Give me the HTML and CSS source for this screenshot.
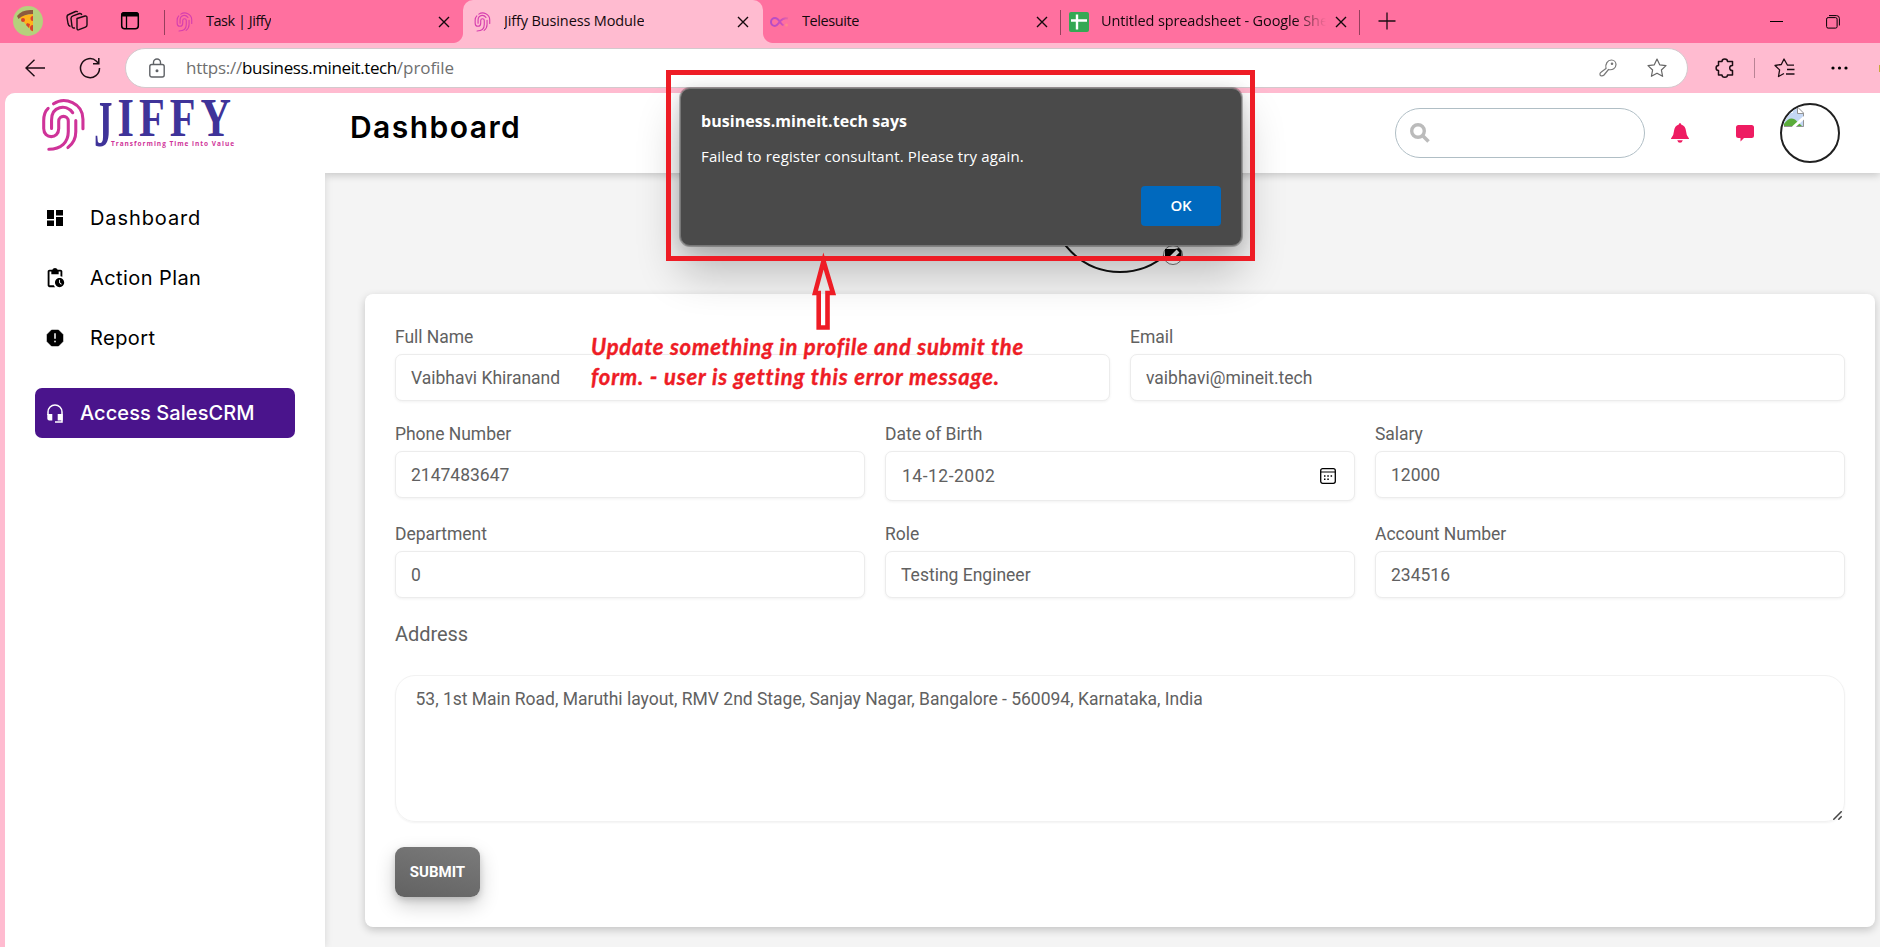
FILE: index.html
```html
<!DOCTYPE html>
<html lang="en">
<head>
<meta charset="utf-8">
<title>Jiffy Business Module</title>
<link rel="stylesheet" href="styles.css">
</head>
<body>
<svg class="defs" width="0" height="0" aria-hidden="true">
  <symbol id="finger" viewBox="38 26 126 158">
    <g fill="none" stroke="currentColor" stroke-linecap="round">
      <path d="M72 43C105 20 158 42 158 88V116"/>
      <path d="M56 56Q43 68 43 92V115C43 147 87 147 87 115V94C87 75 115 75 115 94V125C115 155 95 176 58 176"/>
      <path d="M66 115V90C66 50 108 42 128 69"/>
      <path d="M137 92V125C137 148 128 161 114 171"/>
    </g>
  </symbol>
  <symbol id="close" viewBox="0 0 12 12"><path d="M1 1l10 10M11 1L1 11" fill="none" stroke="currentColor" stroke-width="1.4"/></symbol>
</svg>

<div class="tabstrip">
  <svg class="pizza" width="30" height="30" viewBox="0 0 30 30"><circle cx="15" cy="15" r="15" fill="#b5d17c"/><path d="M5 10L20 8V26Z" fill="#ffb31a"/><path d="M4 10Q9 3 20 4V8Q11 8 5.500 13Z" fill="#8d5b3e"/><circle cx="10" cy="14" r="2" fill="#d8432b"/><path d="M20 10a2.500 2.500 0 0 0 0 5zM20 19a2.500 2.500 0 0 0 0 6zM14 17l3 1-1 4-3-3z" fill="#d8432b"/></svg>
  <svg class="workspaces" width="22" height="22" viewBox="0 0 22 22" fill="none" stroke="#1c0d13" stroke-width="1.4" stroke-linejoin="round"><path d="M11 8.500l8-2.500q2-.4 2 1.600V15q0 1.500-1.500 2.100l-6.500 2.600q-2 .6-2-1.400z"/><path d="M9 17.800q-2.500.8-3-1.500L5 8.500Q5 6.500 7 5.800L13.500 3.500q1.900-.4 2.300 1.500"/><path d="M4.500 16.500Q2.500 16 2 13.500L1 7.500Q.8 5.200 2.800 4.500L9.500 1.500q1.600-.5 2.200.6"/></svg>
  <svg class="vertical" width="20" height="20" viewBox="0 0 20 20"><rect x="1.700" y="1.700" width="16.600" height="16" rx="3" fill="none" stroke="#000" stroke-width="1.500"/><path d="M1 5.500V4Q1 1 4 1H16Q19 1 19 4V5.500Z"/><path d="M6.500 5V18" stroke="#000" stroke-width="1.300"/></svg>
  <i class="sep"></i>
  <div class="tab tab-task"><svg class="fav"><use href="#finger"/></svg><span class="tab-text t1">Task | Jiffy</span><svg class="x"><use href="#close"/></svg></div>
  <div class="tab tab-active"><svg class="fav"><use href="#finger"/></svg><span class="tab-text t2">Jiffy Business Module</span><svg class="x"><use href="#close"/></svg></div>
  <div class="tab tab-tele"><svg class="loop" width="19" height="12" viewBox="0 0 19 12"><defs><linearGradient id="lg" gradientUnits="userSpaceOnUse" x1="0" y1="0" x2="19" y2="0"><stop offset="0" stop-color="#b04cc8"/><stop offset=".6" stop-color="#c84fbe"/><stop offset="1" stop-color="#f06a9c"/></linearGradient></defs><path d="M18 2.500C14 1.200 12 3 10 5.500S7 10 5 10A4 4 0 1 1 5 2C7.500 2 9 4.500 10 6S12 8.800 13.500 9.200" fill="none" stroke="url(#lg)" stroke-width="2"/><circle cx="16.500" cy="9" r="1.500" fill="#ff8a8a"/></svg><span class="tab-text t3">Telesuite</span><svg class="x"><use href="#close"/></svg></div>
  <i class="sep"></i>
  <div class="tab tab-sheet"><svg class="sheet" width="20" height="20" viewBox="0 0 20 20"><rect width="20" height="20" rx="2" fill="#34a853"/><path d="M8 2.500V17.500M2 8.500H18" stroke="#fff" stroke-width="2.400"/></svg><span class="tab-text t4">Untitled spreadsheet - Google Sheets</span><svg class="x"><use href="#close"/></svg></div>
  <i class="sep"></i>
  <svg class="plus" width="18" height="18" viewBox="0 0 18 18"><path d="M9 .5V17.500M.5 9H17.500" stroke="#1c0d13" stroke-width="1.300"/></svg>
  <svg class="min" width="13" height="13" viewBox="0 0 13 13"><path d="M0 6.500H13" stroke="#000"/></svg>
  <svg class="restore" width="14" height="14" viewBox="0 0 14 14" fill="none" stroke="#000"><rect x=".6" y="2.600" width="10.500" height="10.500" rx="1.500"/><path d="M3 .6H10.500Q13.400.6 13.400 3.500V10.500"/></svg>
</div>

<div class="toolbar">
  <svg class="back" width="20" height="18" viewBox="0 0 20 18" fill="none" stroke="#1c0d13" stroke-width="1.400"><path d="M9.500.8L1 9l8.500 8.200M1 9H20"/></svg>
  <svg class="reload" width="22" height="22" viewBox="0 0 22 22" fill="none" stroke="#1c0d13" stroke-width="1.500"><path d="M20.500 11A9.500 9.500 0 1 1 17.500 4.200L19.500 6.500M19.800 1V6.800H14"/></svg>
  <div class="address">
    <svg class="lock" width="16" height="20" viewBox="0 0 16 20" fill="none" stroke="#5f6266" stroke-width="1.400"><rect x=".8" y="6.500" width="14.400" height="12.500" rx="2"/><path d="M4.500 6.500V4.500a3.500 3.500 0 0 1 7 0V6.500"/><circle cx="8" cy="12.700" r=".8" fill="#5f6266"/></svg>
    <span class="url"><span class="u1">https://</span><span class="u2">business.mineit.tech</span><span class="u3">/profile</span></span>
    <svg class="key" width="18" height="18" viewBox="0 0 18 18" fill="none" stroke="#777" stroke-width="1.200"><path d="M7 9.500C6 5 8.500 1 12.500 1A4.600 4.600 0 0 1 17 5.500C17 9 13.500 11.500 9.500 10.500L5 16Q4 17 2.500 16.900Q.8 16.800 1 14.800Q1 13.900 2 13.200Z"/><circle cx="13" cy="4.800" r=".7" fill="#777"/></svg>
    <svg class="star" width="20" height="20" viewBox="0 0 20 20" fill="none" stroke="#666" stroke-width="1.200" stroke-linejoin="round"><path d="M10 1l2.700 5.800 6.300.8-4.600 4.400 1.200 6.300L10 15.200 4.400 18.300 5.600 12 1 7.600l6.300-.8z"/></svg>
  </div>
  <svg class="puzzle" width="20" height="20" viewBox="0 0 20 20" fill="none" stroke="#1c0d13" stroke-width="1.500" stroke-linejoin="round"><path d="M7 3.500C7 .2 12.500.2 12.500 3.500H17.500V7.500C13.800 7 13.800 13 17.500 12.500V17H12.500C12.500 20 7 20 7 17H3.500V12.500C.3 12.500.3 7.500 3.500 7.500V3.500Z"/></svg>
  <i class="tsep"></i>
  <svg class="favs" width="21" height="20" viewBox="0 0 21 20" fill="none" stroke="#1c0d13" stroke-width="1.300" stroke-linejoin="round"><path d="M20 7.200H13.500L10 1 7.300 6.500 1 7.500l4.600 4.400L4.500 18.500 10 15.500M13 11.500H20.500M12 16H20.500"/></svg>
  <svg class="dots" width="17" height="4" viewBox="0 0 17 4"><circle cx="2" cy="2" r="1.600"/><circle cx="8.500" cy="2" r="1.600"/><circle cx="15" cy="2" r="1.600"/></svg>
  <i class="sliver"></i>
</div>

<div class="page">
  <aside class="sidebar">
    <div class="logo">
      <svg class="mark"><use href="#finger"/></svg>
      <svg class="word" width="143" height="54" viewBox="0 0 143 54">
        <g font-family="Liberation Serif, serif" font-weight="700" fill="#3f3399">
          <text transform="translate(1 50) scale(.56 1)" font-size="66">J</text>
          <text transform="translate(24.500 40) scale(.78 1)" font-size="54" letter-spacing="6.500">IFFY</text>
        </g>
        <text x="18" y="50" font-family="Open Sans, sans-serif" font-weight="700" font-size="6.500" fill="#cf3399" textLength="123">Transforming Time into Value</text>
      </svg>
    </div>
    <nav>
      <a class="item"><svg width="24" height="24" viewBox="0 0 24 24"><path d="M4 13h7V4H4zM4 20h7v-5.500H4zM13 20h7v-9h-7zM13 4v5.500h7V4z"/></svg><span class="n1">Dashboard</span></a>
      <a class="item"><svg width="22" height="22" viewBox="0 0 24 24"><path d="M17 12c-2.760 0-5 2.240-5 5s2.240 5 5 5 5-2.240 5-5-2.240-5-5-5zm1.650 7.350L16.500 17.200V14h1v2.790l1.850 1.850-.7.710zM18 3h-3.180C14.400 1.840 13.300 1 12 1s-2.400.84-2.820 2H6c-1.100 0-2 .9-2 2v15c0 1.100.9 2 2 2h6.110c-.59-.57-1.070-1.250-1.420-2H6V5h2v3h8V5h2v5.080c.71.100 1.380.310 2 .600V5c0-1.100-.9-2-2-2z"/></svg><span class="n2">Action Plan</span></a>
      <a class="item"><svg width="20" height="20" viewBox="0 0 20 20"><path fill-rule="evenodd" d="M6.500 2h7L18 6.500v7L13.500 18h-7L2 13.500v-7zM9 5v6h2V5zM9 12.500v2h2v-2z" stroke="#000" stroke-width=".5" stroke-linejoin="round"/></svg><span class="n3">Report</span></a>
      <a class="crm"><svg width="16" height="19" viewBox="0 0 16 19"><path d="M1 11V8a7 7 0 0 1 14 0v10H8" fill="none" stroke="#fff" stroke-width="1.500"/><path d="M.3 10h5v6.500H2.300Q.3 16.500.3 14.500zM10.700 10h5v6.500h-5z" fill="#fff"/></svg><span>Access SalesCRM</span></a>
    </nav>
  </aside>

  <div class="content">
    <header class="header">
      <h1>Dashboard</h1>
      <div class="search"><svg width="20" height="20" viewBox="0 0 20 20"><circle cx="8" cy="8" r="6.300" fill="none" stroke="#bbb" stroke-width="3.400"/><path d="M12.500 12.500L18.500 18.500" stroke="#bbb" stroke-width="3.600"/></svg></div>
      <svg class="bell" width="18" height="20" viewBox="0 0 18 20" fill="#ee1c62"><path d="M9 0q1 0 1.200 1.500Q14.500 2.800 15 8q.3 5 3 7.500V16H0v-.5Q2.700 13 3 8 3.500 2.800 7.800 1.500 8 0 9 0zM6.200 17.300h5.600Q11 19.800 9 19.800T6.200 17.300z"/></svg>
      <svg class="chat" width="18" height="17" viewBox="0 0 18 17" fill="#ee1c62"><path d="M2.500 0h13Q18 0 18 2.500v8Q18 13 15.500 13H8L4.500 16.500V13h-2Q0 13 0 10.500v-8Q0 0 2.500 0z"/></svg>
      <div class="avatar"><svg width="20" height="20" viewBox="0 0 20 20"><path d="M0 0H14L20 6V20H0Z" fill="#c5d8f5"/><path d="M0 19V17Q5 9 11 12.500L18 19Z" fill="#5aac3a"/><path d="M3 6q0-3 3-2 3-1 3 2z" fill="#fff"/><path d="M14 0V6H20Z" fill="#fff"/><path d="M0 .5H14L19.500 6V19.500H0M13.500 0V6.500H20" fill="none" stroke="#949494"/><path d="M9 20.500L20.500 10" stroke="#fff" stroke-width="3"/></svg></div>
    </header>
    <main class="main">
      <div class="photo">
        <svg class="edit" width="20" height="20" viewBox="0 0 20 20"><circle cx="10" cy="10" r="9.500" fill="#fff" stroke="#333" stroke-width=".7"/><path d="M2 4H12L16 3L18.500 6V13H2z"/><path d="M6 15L15 6" stroke="#fff" stroke-width="4"/></svg>
      </div>
      <form class="card">
        <div class="row two">
          <label><span class="lb">Full Name</span><input value="Vaibhavi Khiranand"></label>
          <label><span class="lb">Email</span><input value="vaibhavi@mineit.tech"></label>
        </div>
        <div class="row three">
          <label><span class="lb">Phone Number</span><input value="2147483647"></label>
          <label><span class="lb">Date of Birth</span><span class="date">14-12-2002<svg width="16" height="16" viewBox="0 0 16 16"><rect x=".7" y=".7" width="14.600" height="14.600" rx="2" fill="none" stroke="#000" stroke-width="1.300"/><path d="M1 4H15" stroke="#000"/><path d="M4 8h1.500M7.300 8h1.500M10.600 8h1.500M4 11.300h1.500M7.300 11.300h1.500" stroke="#000" stroke-width="1.600"/></svg></span></label>
          <label><span class="lb">Salary</span><input value="12000"></label>
        </div>
        <div class="row three">
          <label><span class="lb">Department</span><input value="0"></label>
          <label><span class="lb">Role</span><input value="Testing Engineer"></label>
          <label><span class="lb">Account Number</span><input value="234516"></label>
        </div>
        <div class="addr-label">Address</div>
        <div class="area">53, 1st Main Road, Maruthi layout, RMV 2nd Stage, Sanjay Nagar, Bangalore - 560094, Karnataka, India
          <svg class="grip" width="9" height="9" viewBox="0 0 9 9" stroke="#444" stroke-width="1.500"><path d="M.3 8.700L8.700.3M5.300 8.700L8.700 5.300"/></svg>
        </div>
        <button class="submit" type="button">SUBMIT</button>
      </form>
    </main>
  </div>
</div>

<div class="dialog">
  <div class="d-title">business.mineit.tech says</div>
  <div class="d-text">Failed to register consultant. Please try again.</div>
  <div class="d-ok">OK</div>
</div>
<div class="marker"></div>
<svg class="arrow" width="24" height="70" viewBox="0 0 24 70"><path d="M11.500 0L3 32H6.700V66.500H15.500V32H21Z" fill="none" stroke="#ee1c25" stroke-width="4.600"/></svg>
<div class="note"><div class="k1">Update something in profile and submit the</div><div class="k2">form. - user is getting this error message.</div></div>
</body>
</html>
```
FILE: styles.css
```css
* { box-sizing: border-box; }
body { margin: 0; width: 1880px; height: 947px; overflow: hidden; position: relative; background: #ffbbd0; font-family: "Open Sans", sans-serif; }
svg { display: block; flex: none; }
.defs { position: absolute; }

/* tab strip */
.tabstrip { display: flex; height: 43px; background: #ff709f; align-items: flex-start; }
.pizza { margin: 6px 0 0 13px; }
.workspaces { margin: 10px 0 0 23px; }
.vertical { margin: 11px 0 0 32px; }
.sep { width: 1px; height: 25px; margin-top: 10px; background: #963f5c; }
.vertical + .sep { margin-left: 24px; }
.tab { display: flex; height: 43px; position: relative; }
.tab-text { font-size: 14.5px; line-height: 41px; color: #14090d; white-space: nowrap; overflow: hidden; }
.fav { width: 17px; height: 20px; margin-top: 12px; color: #d63fae; stroke-width: 9px; }
.x { width: 12px; height: 12px; margin: 16px 0 0 auto; color: #14090d; }
.tab-task { width: 298px; padding: 0 13px 0 11px; }
.tab-active { width: 300px; padding: 0 14px 0 11px; background: #ffbbd0; border-radius: 10px 10px 0 0; }
.tab-active::before, .tab-active::after { content: ""; position: absolute; bottom: 0; width: 10px; height: 10px; }
.tab-active::before { left: -10px; background: radial-gradient(circle at 0 0, transparent 9.5px, #ffbbd0 10.5px); }
.tab-active::after { right: -10px; background: radial-gradient(circle at 100% 0, transparent 9.5px, #ffbbd0 10.5px); }
.tab-task .tab-text, .tab-active .tab-text { margin-left: 13px; }
.tab-tele { width: 297px; padding: 0 12px 0 7px; }
.loop { margin-top: 16px; }
.tab-tele .tab-text { margin-left: 13px; }
.tab-sheet { width: 298px; padding: 0 12px 0 8px; }
.sheet { margin-top: 12px; }
.tab-sheet .tab-text { margin-left: 12px; width: 225px; -webkit-mask-image: linear-gradient(90deg, #000 86%, transparent 100%); mask-image: linear-gradient(90deg, #000 86%, transparent 100%); }
.t1 { letter-spacing: -.47px; }
.t2 { letter-spacing: -.13px; }
.t3 { letter-spacing: -.4px; }
.t4 { letter-spacing: -.11px; }
.plus { margin: 12px 0 0 18px; }
.min { margin: 15px 0 0 374px; }
.restore { margin: 15px 0 0 43px; }

/* toolbar */
.toolbar { display: flex; height: 50px; align-items: center; position: relative; padding-bottom: 1px; }
.back { margin-left: 25px; }
.reload { margin-left: 34px; }
.address { margin-left: 24px; width: 1563px; height: 40px; border-radius: 20px; border: 1px solid #d3c9cd; background: #fff; display: flex; align-items: center; }
.lock { margin-left: 23px; }
.url { margin-left: 21px; font-size: 17px; line-height: 38px; color: #6f6f6f; white-space: nowrap; width: 1387px; }
.u1 { letter-spacing: -.25px; }
.u2 { letter-spacing: -.4px; color: #000; }
.u3 { letter-spacing: -.05px; }
.key { margin-left: 26px; }
.star { margin-left: 30px; }
.puzzle { margin-left: 27px; }
.tsep { width: 1px; height: 20px; background: #b98394; margin-left: 19px; }
.favs { margin-left: 19px; }
.dots { margin-left: 36px; }
.sliver { position: absolute; right: 0; top: 22px; width: 1px; height: 7px; background: #c9a83c; }

/* page */
.page { display: flex; margin-left: 5px; height: 854px; background: #f4f4f4; border-radius: 10px 0 0 0; overflow: hidden; }
.sidebar { width: 320px; background: #fff; box-shadow: 0 0 8px rgba(0,0,0,.12); }
.logo { height: 95px; display: flex; padding-left: 37px; }
.mark { width: 43px; height: 54px; margin-top: 5px; color: #cf3399; stroke-width: 9px; }
.word { margin-left: 8px; margin-top: 3px; overflow: visible; }
.item, .crm { display: flex; align-items: center; font-family: Inter, sans-serif; font-size: 20px; color: #000; white-space: nowrap; }
.item { height: 60px; padding-left: 38px; }
.item svg { width: 24px; }
.item span { margin-left: 23px; }
.n1 { letter-spacing: .9px; }
.n2 { letter-spacing: .42px; }
.n3 { letter-spacing: .45px; }
.crm { width: 260px; height: 50px; margin: 20px 0 0 30px; padding-left: 12px; background: #4a148c; border-radius: 7px; color: #fff; font-weight: 500; letter-spacing: .08px; }
.crm span { margin-left: 17px; }
.content { width: 1555px; display: flex; flex-direction: column; }
.header { height: 80px; flex: none; background: #fff; display: flex; box-shadow: 0 2px 8px rgba(0,0,0,.2); clip-path: inset(0 0 -20px 0); position: relative; }
h1 { margin: 0; padding-left: 25px; width: 1070px; font: 600 30px/69px Inter, sans-serif; letter-spacing: 1.45px; color: #000; }
.search { width: 250px; height: 50px; margin-top: 15px; border: 1px solid #b0bec5; border-radius: 25px; padding: 14px; }
.bell { margin: 30px 0 0 26px; }
.chat { margin: 32px 0 0 47px; }
.avatar { width: 60px; height: 60px; margin: 10px 0 0 26px; border: 2px solid #212121; border-radius: 50%; overflow: hidden; padding: 2px; }
.main { padding: 0 5px 0 40px; }
.photo { width: 140px; height: 140px; margin: -40px auto 21px; position: relative; border: 2px solid #111; border-radius: 50%; }
.edit { position: absolute; left: 111px; top: 110px; }
.card { margin: 0; height: 633px; background: #fff; border-radius: 8px; box-shadow: 0 3px 8px rgba(0,0,0,.2); padding: 30px; font-family: Roboto, sans-serif; }
.row { display: grid; gap: 20px; margin-bottom: 20px; align-items: start; }
.two { grid-template-columns: 1fr 1fr; }
.three { grid-template-columns: 1fr 1fr 1fr; }
label { display: block; }
.lb { display: block; font-size: 17.5px; line-height: 26px; margin-bottom: 4px; color: #616161; letter-spacing: -.03px; }
input, .date { display: block; width: 100%; height: 47px; border: 1px solid #ececec; border-radius: 7px; box-shadow: 0 1px 3px rgba(0,0,0,.06); background: #fff; padding: 0 15px; font: 400 17.5px/45px Roboto, sans-serif; color: #616161; outline: 0; }
.date { height: 50px; line-height: 48px; padding: 0 18px 0 16px; letter-spacing: .5px; display: flex; justify-content: space-between; align-items: center; }
.addr-label { font-size: 20px; line-height: 30px; margin-top: 21px; color: #616161; letter-spacing: -.05px; }
.area { position: relative; margin-top: 26px; height: 147px; border: 1px solid #f2f2f2; border-radius: 20px; box-shadow: 0 1px 2px rgba(0,0,0,.05); padding: 10px 19.5px; font-size: 17.5px; line-height: 26px; color: #616161; letter-spacing: -.01px; }
.grip { position: absolute; right: 2px; bottom: 1px; }
.submit { display: block; margin-top: 25px; width: 85px; height: 50px; border: 0; padding: 0; border-radius: 9px; background: linear-gradient(15deg, #626262, #7b7b7b); color: #fff; font: 700 15px/50px Roboto, sans-serif; box-shadow: 0 8px 20px rgba(0,0,0,.2), 0 3px 6px rgba(0,0,0,.15); }

/* browser alert */
.dialog { position: absolute; left: 680px; top: 88px; width: 562px; height: 158px; border-radius: 10px; background: #4a4a4a; border: 1px solid #777; box-shadow: 0 0 0 1px rgba(0,0,0,.25), 0 26px 44px rgba(0,0,0,.24), 0 3px 18px rgba(0,0,0,.16); color: #fff; padding: 19px 20px; }
.d-title { font-size: 16px; font-weight: 700; line-height: 26px; letter-spacing: .05px; }
.d-text { font-size: 15px; line-height: 24px; margin-top: 10px; letter-spacing: .14px; }
.d-ok { margin: 18px 0 0 auto; width: 80px; height: 40px; border-radius: 4px; background: #0069be; text-align: center; font-weight: 600; font-size: 15px; line-height: 38px; letter-spacing: -.3px; }

/* annotations */
.marker { position: absolute; left: 666px; top: 70px; width: 589px; height: 191px; border: 5px solid #ee1c25; }
.arrow { position: absolute; left: 812px; top: 261px; overflow: visible; }
.note { position: absolute; left: 591px; top: 332px; font: italic 700 22px/29.5px Lato, sans-serif; -webkit-text-stroke: .4px #ee1c25; color: #ee1c25; white-space: nowrap; }
.k1 { letter-spacing: .78px; }
.k2 { letter-spacing: .84px; }
```
